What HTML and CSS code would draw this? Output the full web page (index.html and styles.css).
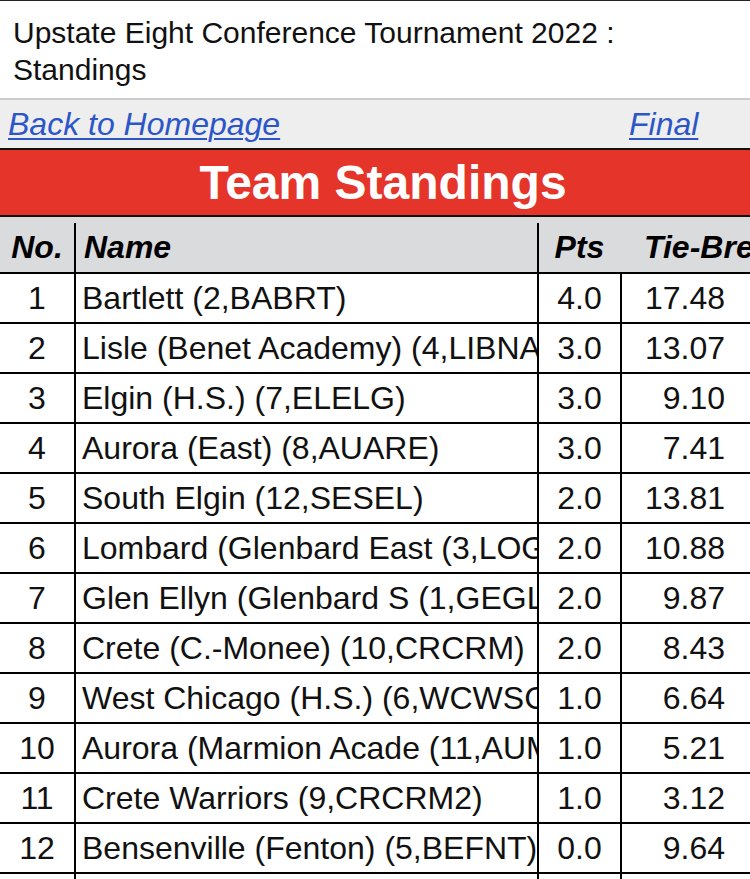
FILE: index.html
```html
<!DOCTYPE html>
<html lang="en">
<head>
<meta charset="utf-8">
<title>Upstate Eight Conference Tournament 2022 : Standings</title>
<link rel="stylesheet" href="styles.css">
</head>
<body>
<div class="page">
  <div class="title">Upstate Eight Conference Tournament 2022 : Standings</div>
  <div class="links">
    <a class="link" href="#">Back to Homepage</a>
    <a class="link" href="#">Final</a>
  </div>
  <div class="banner">Team Standings</div>
  <div class="thead">
    <div class="th th-no">No.</div>
    <div class="th th-name">Name</div>
    <div class="th th-pts">Pts</div>
    <div class="th th-tie">Tie-Break</div>
  </div>
  <div class="tbody">
    <div class="row"><div class="td no">1</div><div class="td name">Bartlett (2,BABRT)</div><div class="td pts">4.0</div><div class="td tie">17.48</div></div>
    <div class="row"><div class="td no">2</div><div class="td name">Lisle (Benet Academy) (4,LIBNA)</div><div class="td pts">3.0</div><div class="td tie">13.07</div></div>
    <div class="row"><div class="td no">3</div><div class="td name">Elgin (H.S.) (7,ELELG)</div><div class="td pts">3.0</div><div class="td tie">9.10</div></div>
    <div class="row"><div class="td no">4</div><div class="td name">Aurora (East) (8,AUARE)</div><div class="td pts">3.0</div><div class="td tie">7.41</div></div>
    <div class="row"><div class="td no">5</div><div class="td name">South Elgin (12,SESEL)</div><div class="td pts">2.0</div><div class="td tie">13.81</div></div>
    <div class="row"><div class="td no">6</div><div class="td name">Lombard (Glenbard East (3,LOGLE)</div><div class="td pts">2.0</div><div class="td tie">10.88</div></div>
    <div class="row"><div class="td no">7</div><div class="td name">Glen Ellyn (Glenbard S (1,GEGLS)</div><div class="td pts">2.0</div><div class="td tie">9.87</div></div>
    <div class="row"><div class="td no">8</div><div class="td name">Crete (C.-Monee) (10,CRCRM)</div><div class="td pts">2.0</div><div class="td tie">8.43</div></div>
    <div class="row"><div class="td no">9</div><div class="td name">West Chicago (H.S.) (6,WCWSC)</div><div class="td pts">1.0</div><div class="td tie">6.64</div></div>
    <div class="row"><div class="td no">10</div><div class="td name">Aurora (Marmion Acade (11,AUMAR)</div><div class="td pts">1.0</div><div class="td tie">5.21</div></div>
    <div class="row"><div class="td no">11</div><div class="td name">Crete Warriors (9,CRCRM2)</div><div class="td pts">1.0</div><div class="td tie">3.12</div></div>
    <div class="row"><div class="td no">12</div><div class="td name">Bensenville (Fenton) (5,BEFNT)</div><div class="td pts">0.0</div><div class="td tie">9.64</div></div>
    <div class="row"><div class="td no"></div><div class="td name"></div><div class="td pts"></div><div class="td tie"></div></div>
  </div>
</div>
</body>
</html>
```
FILE: styles.css
```css
html, body {
  margin: 0;
  padding: 0;
  background: #ffffff;
  overflow: hidden;
}

body {
  font-family: "Liberation Sans", Arial, Helvetica, sans-serif;
  color: #111111;
}

.page {
  width: 766px;
}

.title {
  border-top: 1px solid #222222;
  border-bottom: 2px solid #cccccc;
  padding: 13px 40px 10px 13px;
  font-size: 30px;
  line-height: 37px;
  color: #111111;
}

.links {
  display: grid;
  grid-template-columns: 621px 1fr;
  background: #eeeeee;
  border-bottom: 2px solid #111111;
  height: 48px;
}

.link {
  padding-left: 8px;
  font-size: 32px;
  line-height: 48px;
  font-style: italic;
  color: #2c56c8;
  text-decoration: underline;
  text-decoration-thickness: 2px;
  text-underline-offset: 3px;
  white-space: nowrap;
}

.banner {
  background: #e5352a;
  color: #ffffff;
  height: 65px;
  line-height: 65px;
  font-size: 48px;
  font-weight: bold;
  text-align: center;
  border-bottom: 2px solid #111111;
}

.thead {
  display: grid;
  grid-template-columns: 74px 463px 83px 146px;
  background: #dadbdd;
  padding-top: 6px;
  border-bottom: 2px solid #000000;
}

.th {
  height: 49px;
  line-height: 49px;
  font-size: 32px;
  font-weight: bold;
  font-style: italic;
  color: #000000;
  white-space: nowrap;
  overflow: hidden;
  box-sizing: border-box;
}

.th-no {
  text-align: center;
}

.th-name {
  border-left: 2px solid #000000;
  padding-left: 8px;
}

.th-pts {
  border-left: 2px solid #000000;
  text-align: center;
}

.th-tie {
  padding-left: 24px;
}

.row {
  display: grid;
  grid-template-columns: 74px 463px 83px 146px;
  border-bottom: 2px solid #000000;
}

.td {
  height: 48px;
  line-height: 48px;
  font-size: 32px;
  color: #111111;
  white-space: nowrap;
  overflow: hidden;
  box-sizing: border-box;
}

.no {
  text-align: center;
}

.name {
  border-left: 2px solid #000000;
  padding-left: 6px;
}

.pts {
  border-left: 2px solid #000000;
  text-align: center;
}

.tie {
  border-left: 2px solid #000000;
  text-align: right;
  padding-right: 41px;
}
```
